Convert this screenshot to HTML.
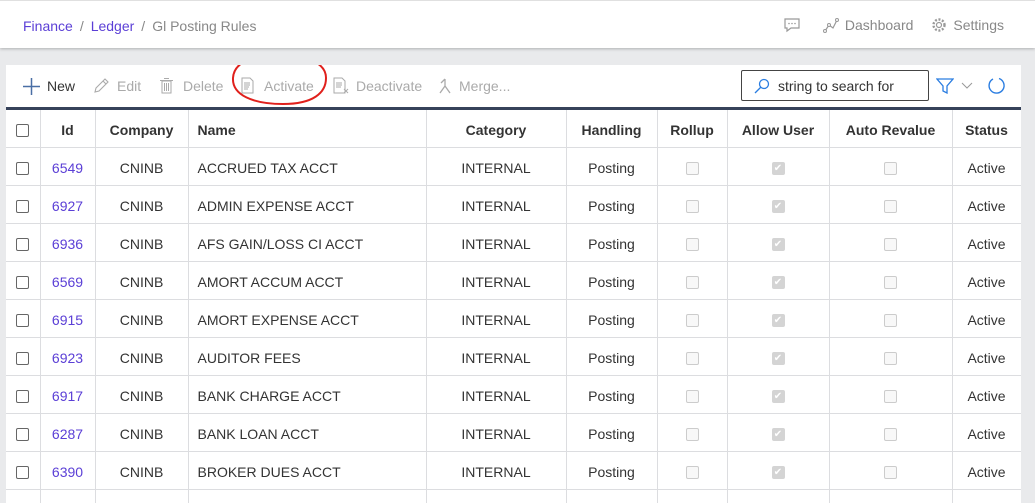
<!DOCTYPE html>
<html><head><style>
*{box-sizing:border-box;margin:0;padding:0}
html,body{width:1035px;height:503px;overflow:hidden}
body{background:#e9eaec;font-family:"Liberation Sans",sans-serif;font-size:14px;color:#333;position:relative}
.top{position:absolute;left:0;top:0;width:1035px;height:48px;background:#fff;border-top:1px solid #e0e0e0;box-shadow:0 1px 3px rgba(0,0,0,.25)}
.bc{position:absolute;left:23px;top:17px;font-size:14px;color:#888}
.bc a{color:#5b3fd6;text-decoration:none}
.bc span{margin:0 7px;color:#888}
.tr{position:absolute;right:31px;top:16px;color:#888;font-size:14px;display:flex;align-items:center;gap:6px}
.panel{position:absolute;left:6px;top:65px;width:1015px;height:438px;background:#fff;overflow:hidden}
.b{position:absolute;top:13px;color:#aaa;font-size:14px;white-space:nowrap}
.ic{position:absolute}
.search{position:absolute;left:735px;top:5px;width:188px;height:31px;border:1px solid #444;border-radius:2px;display:flex;align-items:center;padding-left:12px;gap:8px;color:#333}
table{position:absolute;left:0;top:42px;border-collapse:collapse;table-layout:fixed;width:1015px;border-top:3px solid #36425a}
td,th{border:1px solid #dcdde0;height:38px;text-align:center;white-space:nowrap;overflow:hidden;padding-top:2px}
th{height:39px;font-weight:bold;color:#333}
td.n,th.n{text-align:left;padding-left:9px}
td a{color:#5b3fd6}
.cb{display:inline-block;width:13px;height:13px;border:1px solid #666;border-radius:2px;vertical-align:middle}
.cd{display:inline-block;width:13px;height:13px;border:1px solid #ccc;border-radius:2px;background:#f8f8f8;vertical-align:middle}
.ck{display:inline-block;width:13px;height:13px;border-radius:2px;background:#d4d4d4;vertical-align:middle;color:#fff;font-size:10px;line-height:13px}
tr td:first-child,tr th:first-child{border-left:none}
</style></head><body>
<div class="top">
<div class="bc"><a>Finance</a><span>/</span><a>Ledger</a><span>/</span>Gl Posting Rules</div>
<div class="tr">
<svg width="18" height="16" viewBox="0 0 18 16"><path d="M2 2h14v9H8l-4 3v-3H2z" fill="none" stroke="#999" stroke-width="1.2"/><circle cx="6" cy="6.5" r=".8" fill="#999"/><circle cx="9" cy="6.5" r=".8" fill="#999"/><circle cx="12" cy="6.5" r=".8" fill="#999"/></svg>
<span style="width:10px"></span>
<svg width="16" height="16" viewBox="0 0 16 16"><path d="M2 14l4-6 4 3 4-8" fill="none" stroke="#999" stroke-width="1.2"/><circle cx="2" cy="14" r="1.5" fill="#fff" stroke="#999"/><circle cx="6" cy="8" r="1.5" fill="#fff" stroke="#999"/><circle cx="14" cy="3" r="1.5" fill="#fff" stroke="#999"/></svg>Dashboard
<span style="width:6px"></span>
<svg width="16" height="16" viewBox="0 0 16 16"><circle cx="8" cy="8" r="2.5" fill="none" stroke="#999" stroke-width="1.2"/><circle cx="8" cy="8" r="5.5" fill="none" stroke="#999" stroke-width="2.4" stroke-dasharray="2 1.6"/></svg>Settings
</div>
</div>
<div class="panel">
<svg class="ic" style="left:17px;top:13px" width="17" height="17" viewBox="0 0 17 17"><path d="M8.5 0v17M0 8.5h17" stroke="#4a6fa5" stroke-width="1.5"/></svg>
<div class="b" style="left:41px;color:#333">New</div>
<svg class="ic" style="left:87px;top:13px" width="16" height="16" viewBox="0 0 16 16"><path d="M2 14l1-4 9-9 3 3-9 9z M10 3l3 3" fill="none" stroke="#aaa" stroke-width="1.1"/></svg>
<div class="b" style="left:111px">Edit</div>
<svg class="ic" style="left:154px;top:12px" width="13" height="17" viewBox="0 0 13 17"><rect x="2" y="4" width="9" height="12" fill="none" stroke="#aaa"/><path d="M0 3.5h13M4 1.5h5M4.5 6v8M6.5 6v8M8.5 6v8" stroke="#aaa"/></svg>
<div class="b" style="left:177px">Delete</div>
<svg class="ic" style="left:235px;top:12px" width="14" height="17" viewBox="0 0 14 17"><path d="M1 1h8l3 3v12H1z" fill="none" stroke="#aaa"/><path d="M3 6h6M3 8h6M3 10h5M3 12h4" stroke="#aaa"/></svg>
<div class="b" style="left:258px">Activate</div>
<svg class="ic" style="left:327px;top:12px" width="16" height="17" viewBox="0 0 16 17"><path d="M1 1h8l3 3v12H1z" fill="none" stroke="#aaa"/><path d="M3 6h6M3 8h6M3 10h5M11 12l4 4M15 12l-4 4" stroke="#aaa"/></svg>
<div class="b" style="left:350px">Deactivate</div>
<svg class="ic" style="left:432px;top:13px" width="14" height="16" viewBox="0 0 14 16"><path d="M7 1v7M3 5l4-4M2 15l5-7 5 7" fill="none" stroke="#aaa" stroke-width="1.3"/></svg>
<div class="b" style="left:453px">Merge...</div>
<svg style="position:absolute;left:225px;top:-12px" width="98" height="55" viewBox="0 0 98 55"><path d="M50 2C25 1 3 8 2 25c-1 17 20 26 50 26 30 0 43-11 43-26C95 10 76 2 48 3" fill="none" stroke="#e0201c" stroke-width="2"/></svg>
<div class="search"><svg width="16" height="16" viewBox="0 0 16 16"><circle cx="10" cy="6" r="4.5" fill="none" stroke="#2a7de1" stroke-width="1.3"/><path d="M7 9l-6 6" stroke="#2a7de1" stroke-width="1.3"/></svg>string to search for</div>
<svg style="position:absolute;left:930px;top:13px" width="18" height="16" viewBox="0 0 18 16"><path d="M1 1h16l-6 7v7l-4-2V8z" fill="none" stroke="#2a7de1" stroke-width="1.3"/></svg>
<svg style="position:absolute;left:955px;top:17px" width="12" height="8" viewBox="0 0 12 8"><path d="M1 1l5 5 5-5" fill="none" stroke="#999"/></svg>
<svg style="position:absolute;left:981px;top:11px" width="20" height="20" viewBox="0 0 20 20"><path d="M6 3A7.5 7.5 0 1 0 12 2.5" fill="none" stroke="#2a7de1" stroke-width="1.4"/></svg>
<table>
<colgroup><col style="width:34px"><col style="width:55px"><col style="width:93px"><col style="width:238px"><col style="width:140px"><col style="width:91px"><col style="width:70px"><col style="width:102px"><col style="width:123px"><col style="width:69px"></colgroup>
<tr><th><span class="cb"></span></th><th>Id</th><th>Company</th><th class="n">Name</th><th>Category</th><th>Handling</th><th>Rollup</th><th>Allow User</th><th>Auto Revalue</th><th>Status</th></tr>
<tr><td><span class="cb"></span></td><td><a>6549</a></td><td>CNINB</td><td class="n">ACCRUED TAX ACCT</td><td>INTERNAL</td><td>Posting</td><td><span class="cd"></span></td><td><span class="ck">✔</span></td><td><span class="cd"></span></td><td>Active</td></tr>
<tr><td><span class="cb"></span></td><td><a>6927</a></td><td>CNINB</td><td class="n">ADMIN EXPENSE ACCT</td><td>INTERNAL</td><td>Posting</td><td><span class="cd"></span></td><td><span class="ck">✔</span></td><td><span class="cd"></span></td><td>Active</td></tr>
<tr><td><span class="cb"></span></td><td><a>6936</a></td><td>CNINB</td><td class="n">AFS GAIN/LOSS CI ACCT</td><td>INTERNAL</td><td>Posting</td><td><span class="cd"></span></td><td><span class="ck">✔</span></td><td><span class="cd"></span></td><td>Active</td></tr>
<tr><td><span class="cb"></span></td><td><a>6569</a></td><td>CNINB</td><td class="n">AMORT ACCUM ACCT</td><td>INTERNAL</td><td>Posting</td><td><span class="cd"></span></td><td><span class="ck">✔</span></td><td><span class="cd"></span></td><td>Active</td></tr>
<tr><td><span class="cb"></span></td><td><a>6915</a></td><td>CNINB</td><td class="n">AMORT EXPENSE ACCT</td><td>INTERNAL</td><td>Posting</td><td><span class="cd"></span></td><td><span class="ck">✔</span></td><td><span class="cd"></span></td><td>Active</td></tr>
<tr><td><span class="cb"></span></td><td><a>6923</a></td><td>CNINB</td><td class="n">AUDITOR FEES</td><td>INTERNAL</td><td>Posting</td><td><span class="cd"></span></td><td><span class="ck">✔</span></td><td><span class="cd"></span></td><td>Active</td></tr>
<tr><td><span class="cb"></span></td><td><a>6917</a></td><td>CNINB</td><td class="n">BANK CHARGE ACCT</td><td>INTERNAL</td><td>Posting</td><td><span class="cd"></span></td><td><span class="ck">✔</span></td><td><span class="cd"></span></td><td>Active</td></tr>
<tr><td><span class="cb"></span></td><td><a>6287</a></td><td>CNINB</td><td class="n">BANK LOAN ACCT</td><td>INTERNAL</td><td>Posting</td><td><span class="cd"></span></td><td><span class="ck">✔</span></td><td><span class="cd"></span></td><td>Active</td></tr>
<tr><td><span class="cb"></span></td><td><a>6390</a></td><td>CNINB</td><td class="n">BROKER DUES ACCT</td><td>INTERNAL</td><td>Posting</td><td><span class="cd"></span></td><td><span class="ck">✔</span></td><td><span class="cd"></span></td><td>Active</td></tr>
<tr><td><span class="cb"></span></td><td></td><td></td><td class="n"></td><td></td><td></td><td></td><td></td><td></td><td></td></tr>
</table>
</div>
</body></html>
